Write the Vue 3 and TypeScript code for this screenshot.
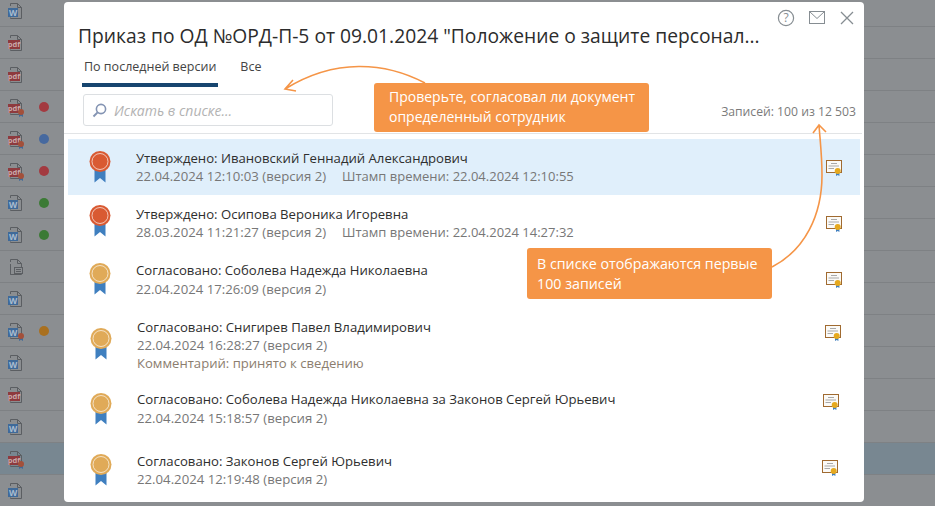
<script setup lang="ts">
interface BgRow { kind: 'w' | 'pdf' | 'doc'; stamp?: boolean; dot?: string; active?: boolean }
interface Row { title: string; meta: string; stamp?: string; note?: string; tone: 'red' | 'gold' }

const bgRows: BgRow[] = [
  { kind: 'w' }, { kind: 'pdf' }, { kind: 'pdf' },
  { kind: 'pdf', stamp: true, dot: '#a33a40' },
  { kind: 'pdf', stamp: true, dot: '#46699f' },
  { kind: 'pdf', stamp: true, dot: '#a33a40' },
  { kind: 'w', dot: '#3b7a35' }, { kind: 'w', dot: '#3b7a35' },
  { kind: 'doc' }, { kind: 'w' },
  { kind: 'w', stamp: true, dot: '#a9701f' },
  { kind: 'w' }, { kind: 'pdf' }, { kind: 'w' },
  { kind: 'pdf', stamp: true, active: true },
  { kind: 'w' }
]

const rows: Row[] = [
  { title: 'Утверждено: Ивановский Геннадий Александрович', meta: '22.04.2024 12:10:03 (версия 2)', stamp: 'Штамп времени: 22.04.2024 12:10:55', tone: 'red' },
  { title: 'Утверждено: Осипова Вероника Игоревна', meta: '28.03.2024 11:21:27 (версия 2)', stamp: 'Штамп времени: 22.04.2024 14:27:32', tone: 'red' },
  { title: 'Согласовано: Соболева Надежда Николаевна', meta: '22.04.2024 17:26:09 (версия 2)', tone: 'gold' },
  { title: 'Согласовано: Снигирев Павел Владимирович', meta: '22.04.2024 16:28:27 (версия 2)', note: 'Комментарий: принято к сведению', tone: 'gold' },
  { title: 'Согласовано: Соболева Надежда Николаевна за Законов Сергей Юрьевич', meta: '22.04.2024 15:18:57 (версия 2)', tone: 'gold' },
  { title: 'Согласовано: Законов Сергей Юрьевич', meta: '22.04.2024 12:19:48 (версия 2)', tone: 'gold' }
]
</script>

<template>
  <div class="page">
    <div class="bg-list">
      <div v-for="(r, i) in bgRows" :key="i" class="bg-row" :class="{ active: r.active }">
        <svg class="file" width="14" height="16" viewBox="0 0 14 16" fill="none">
          <path d="M2.5 3V0.5H9.5L13.5 4.5V15.5H2.5V14.5" stroke="#5b5e62" />
          <path d="M9.5 0.5V4.5H13.5" stroke="#5b5e62" />
          <template v-if="r.kind === 'w'">
            <rect x="0" y="5" width="10" height="9" fill="#3f6a99" />
            <text x="5" y="12.6" class="wtxt" text-anchor="middle">W</text>
          </template>
          <template v-else-if="r.kind === 'pdf'">
            <rect x="0" y="5" width="12" height="9" fill="#8e3a3e" />
            <text x="6" y="12" class="ptxt" text-anchor="middle">pdf</text>
          </template>
          <template v-else>
            <path d="M2.5 5V15.5" stroke="#5b5e62" />
            <rect x="6.5" y="8.5" width="8" height="6" fill="#8b8e91" stroke="#5b5e62" />
            <path d="M8 10.5H13M8 12.5H13" stroke="#5b5e62" />
          </template>
          <template v-if="r.stamp">
            <path d="M11 14H15V18L13 16.8L11 18Z" fill="#3f6a99" />
            <circle cx="13" cy="13" r="3" fill="#a3503a" />
          </template>
        </svg>
        <span v-if="r.dot" class="dot" :style="{ background: r.dot }"></span>
      </div>
    </div>

    <div class="modal">
      <div class="top-icons">
        <svg width="18" height="18" viewBox="0 0 18 18" fill="none">
          <circle cx="9" cy="9" r="7.6" stroke="#868d92" stroke-width="1.2" />
          <text x="9" y="13.2" class="q" text-anchor="middle">?</text>
        </svg>
        <svg width="17" height="14" viewBox="0 0 17 14" fill="none">
          <rect x="0.5" y="0.5" width="15" height="12" stroke="#868d92" />
          <path d="M0.5 0.5L8 7.5L15.5 0.5" stroke="#868d92" />
        </svg>
        <svg width="14" height="14" viewBox="0 0 14 14" fill="none">
          <path d="M1 1L13 13M13 1L1 13" stroke="#868d92" stroke-width="1.3" />
        </svg>
      </div>

      <h1 class="title">Приказ по ОД №ОРД-П-5 от 09.01.2024 "Положение о защите персонал...</h1>

      <div class="tabs">
        <div class="tab on">По последней версии</div>
        <div class="tab">Все</div>
      </div>

      <div class="tools">
        <div class="search">
          <svg width="15" height="15" viewBox="0 0 15 15" fill="none">
            <circle cx="9" cy="6" r="4.6" stroke="#8494b3" stroke-width="1.6" />
            <path d="M5.6 9.4L1.5 13.5" stroke="#8494b3" stroke-width="2" />
          </svg>
          <span>Искать в списке...</span>
        </div>
        <div class="count">Записей: 100 из 12 503</div>
      </div>

      <div class="list">
        <div v-for="(r, i) in rows" :key="i" class="row" :class="'row-' + (i + 1)">
          <svg class="medal" width="22" height="32" viewBox="0 0 22 32">
            <path d="M5.5 18H16.5V31.5L11 27L5.5 31.5Z" fill="#3f7fbf" />
            <circle cx="11" cy="10.5" r="10.5" :fill="r.tone === 'red' ? '#d95a32' : '#e0aa58'" />
            <circle cx="11" cy="10.5" r="8" fill="none" stroke="#fff" stroke-opacity=".65" />
          </svg>
          <div class="body">
            <div class="name">{{ r.title }}</div>
            <div class="meta">
              <span>{{ r.meta }}</span>
              <span v-if="r.stamp" class="stamp">{{ r.stamp }}</span>
            </div>
            <div v-if="r.note" class="note">{{ r.note }}</div>
          </div>
          <svg class="cert" width="16" height="16" viewBox="0 0 16 16" fill="none">
            <rect x="0.5" y="0.5" width="15" height="12" fill="#fbfaf7" stroke="#a06a30" />
            <path d="M5 3.5H11M2.5 6H13M2.5 8.5H8" stroke="#a9a9a9" />
            <path d="M10 12H13.4V16L11.7 15L10 16Z" fill="#3f7fbf" />
            <circle cx="11.7" cy="11" r="3" fill="#e6a91e" />
          </svg>
        </div>
      </div>
    </div>

    <svg class="arrows" width="935" height="506" viewBox="0 0 935 506" fill="none">
      <path d="M425 83C385 62 335 58 285 89M293 80L285 89L296 91" stroke="#f59547" stroke-width="1.6" />
      <path d="M772 267C805 250 822 215 822 175C822 155 820 140 819 125M813 133L819 125L826 132" stroke="#f59547" stroke-width="1.6" />
    </svg>
    <div class="tip tip-a">Проверьте, согласовал ли документ<br />определенный сотрудник</div>
    <div class="tip tip-b">В списке отображаются первые<br />100 записей</div>
  </div>
</template>

<style>
html, body { margin: 0; background: #8b8e91; overflow: hidden; }
</style>

<style scoped>
.page {
  position: relative;
  width: 935px;
  height: 506px;
  overflow: hidden;
  background: #8b8e91;
  font-family: "Open Sans", "Noto Sans", sans-serif;
}
.bg-list { margin-top: -5px; }
.bg-row {
  display: flex;
  align-items: center;
  height: 31px;
  border-bottom: 1px solid #7e8184;
  padding-left: 8px;
}
.bg-row.active { background: #788791; }
.file { flex: none; overflow: visible; }
.wtxt { font: 700 8.5px "Open Sans", sans-serif; fill: #a9bccf; }
.ptxt { font: 700 7.5px "Open Sans", sans-serif; fill: #c9a9aa; }
.dot { width: 10px; height: 10px; border-radius: 50%; margin-left: 17px; }

.modal {
  position: absolute;
  left: 64px;
  top: 2px;
  width: 800px;
  height: 500px;
  background: #fff;
  border-radius: 4px;
}
.top-icons {
  position: absolute;
  top: 7px;
  right: 10px;
  display: flex;
  align-items: center;
  gap: 14px;
}
.q { font: 400 12px "Open Sans", sans-serif; fill: #868d92; }
.title {
  margin: 0;
  padding: 20px 0 0 14px;
  font-size: 19.25px;
  line-height: 27px;
  font-weight: 400;
  color: #2c2c2c;
  white-space: nowrap;
}
.tabs { display: flex; gap: 20px; padding: 7px 0 0 18px; height: 38px; box-sizing: border-box; }
.tab { font-size: 12.5px; line-height: 22px; color: #444; padding: 0 2px; }
.tab.on { border-bottom: 4px solid #17456f; height: 31px; box-sizing: border-box; }
.tools {
  display: flex;
  justify-content: space-between;
  align-items: flex-end;
  padding: 7px 6px 7px 19px;
  border-bottom: 1px solid #e2e4e6;
  margin-right: 2px;
}
.search {
  display: flex;
  align-items: center;
  gap: 7px;
  width: 250px;
  height: 32px;
  box-sizing: border-box;
  padding-left: 8px;
  border: 1px solid #dcdfe2;
  border-radius: 3px;
  font-size: 14px;
  font-style: italic;
  color: #b3b3b3;
}
.count { font-size: 12.2px; line-height: 18px; color: #7b7b7b; padding-bottom: 5px; }
.list { margin: 5px 4px 0; }
.row { display: flex; align-items: flex-start; padding-top: 10px; box-sizing: border-box; height: 56px; }
.row-1 { background: #e0effb; }
.row-3 { height: 57px; }
.row-4 { height: 72px; }
.row-5 { height: 62px; }
.row-3 .meta, .row-5 .meta { margin-top: 1px; }
.medal { flex: none; margin: 2px 0 0 21px; }
.row-2 .medal { margin-top: 0; }
.row-4 .medal { margin: 10px 0 0 22px; }
.row-5 .medal { margin: 3px 0 0 22px; }
.row-6 .medal { margin-left: 22px; }
.body { margin-left: 25px; flex: 1; min-width: 0; }
.name { font-size: 13.15px; line-height: 18px; color: #2e2e2e; white-space: nowrap; }
.meta { font-size: 13.2px; line-height: 18px; color: #777; white-space: nowrap; display: flex; gap: 16px; }
.stamp { font-size: 13px; }
.note { font-size: 13.1px; line-height: 18px; color: #8b7d6e; }
.cert { flex: none; margin: 11px 18px 0 0; overflow: visible; }
.row-4 .cert { margin: 7px 19px 0 0; }
.row-5 .cert { margin: 4px 21px 0 0; }
.row-6 .cert { margin: 8px 22px 0 0; }

.arrows { position: absolute; left: 0; top: 0; pointer-events: none; }
.tip {
  position: absolute;
  box-sizing: border-box;
  background: #f59547;
  color: #fff;
  border-radius: 3px;
  font-size: 14px;
  line-height: 20px;
  white-space: nowrap;
}
.tip-a { left: 374px; top: 83px; width: 275px; height: 49px; padding: 4px 0 0 15px; }
.tip-b { left: 527px; top: 248px; width: 245px; height: 51px; padding: 6px 0 0 10px; font-size: 14.25px; }
</style>
